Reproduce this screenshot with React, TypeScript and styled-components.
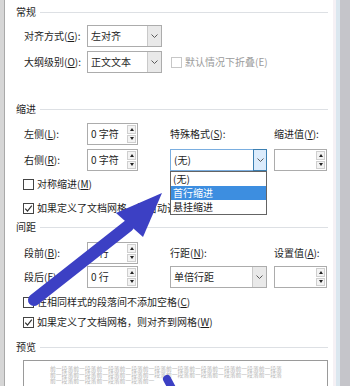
import React from "react";
import styled, { createGlobalStyle } from "styled-components";

const GlobalStyle = createGlobalStyle`
  html, body {
    margin: 0;
    padding: 0;
    background: #fff;
  }
  body {
    width: 350px;
    height: 386px;
    overflow: hidden;
    font-family: "Noto Sans CJK SC", "Noto Sans", sans-serif;
  }
`;

const Screen = styled.div`
  position: relative;
  display: flex;
  width: 350px;
  height: 386px;
  overflow: hidden;
`;

const LeftEdge = styled.div`
  width: 4px;
  background: #d6d6d6;
  border-right: 1px solid #a9a9a9;
`;

const RightEdge = styled.div`
  width: 10px;
  border-left: 3px solid #f5f1f5;
  box-shadow: inset 4px 0 0 #dbe7ef;
  padding-left: 4px;
  background: #c5c5ca;
  background-clip: content-box;
  box-sizing: content-box;
`;

const Dialog = styled.div`
  flex: 1;
  display: flex;
  flex-direction: column;
  padding: 5px 5px 0 11px;
  background: #fff;
  color: #1e1e1e;
  font-size: 10px;
  line-height: 14px;

  & > * {
    flex-shrink: 0;
  }
`;

const SectionTitle = styled.div<{ $top: number }>`
  display: flex;
  align-items: center;
  gap: 4px;
  height: 14px;
  margin-top: ${(p) => p.$top}px;

  &::after {
    content: "";
    flex: 1;
    height: 1px;
    background: #dde0e4;
  }
`;

const Row = styled.div<{ $top: number }>`
  display: flex;
  align-items: center;
  height: 22px;
  margin: ${(p) => p.$top}px 0 0 8px;
`;

const Label = styled.div<{ $width?: number }>`
  width: ${(p) => (p.$width ? `${p.$width}px` : "auto")};
  white-space: nowrap;
  display: flex;
  align-items: center;
`;

const FormGrid = styled.div<{ $top: number; $gap: number }>`
  display: grid;
  grid-template-columns: 63px 51px 32px 104px 53px;
  grid-auto-rows: 22px;
  row-gap: ${(p) => p.$gap}px;
  align-items: center;
  margin: ${(p) => p.$top}px 0 0 8px;
`;

const SelectWrap = styled.div`
  position: relative;
`;

const SelectBox = styled.div<{ $width: number; $focused?: boolean }>`
  display: flex;
  width: ${(p) => p.$width}px;
  height: 22px;
  box-sizing: border-box;
  border: 1px solid ${(p) => (p.$focused ? "#7aaee0" : "#acacac")};
  background: #fff;
`;

const SelectText = styled.div`
  flex: 1;
  display: flex;
  align-items: center;
  padding-left: 3px;
`;

const SelectButton = styled.div<{ $focused?: boolean }>`
  width: 14px;
  display: flex;
  align-items: center;
  justify-content: center;
  box-sizing: border-box;
  margin: ${(p) => (p.$focused ? "-1px -1px -1px 0" : "0")};
  border: ${(p) => (p.$focused ? "1px solid #3c7fb1" : "none")};
  border-left: 1px solid ${(p) => (p.$focused ? "#3c7fb1" : "#c9c9c9")};
  background: ${(p) => (p.$focused ? "#dcecfc" : "#e9e9e9")};
`;

const DropList = styled.div`
  position: absolute;
  top: 100%;
  left: 0;
  width: 97px;
  box-sizing: border-box;
  border: 1px solid #646464;
  background: #fff;
  z-index: 2;
`;

const DropItem = styled.div<{ $active?: boolean }>`
  height: 14px;
  line-height: 14px;
  padding-left: 2px;
  background: ${(p) => (p.$active ? "#3d8ee0" : "transparent")};
  color: ${(p) => (p.$active ? "#fff" : "#1e1e1e")};
`;

const SpinBox = styled.div<{ $width: number }>`
  display: flex;
  width: ${(p) => p.$width}px;
  height: 22px;
  box-sizing: border-box;
  border: 1px solid #acacac;
  background: #fff;
`;

const SpinText = styled.div`
  flex: 1;
  display: flex;
  align-items: center;
  padding-left: 3px;
  white-space: nowrap;
`;

const SpinButtons = styled.div`
  width: 9px;
  display: flex;
  flex-direction: column;
  gap: 1px;
  padding: 1px 1px 1px 0;
`;

const SpinButton = styled.div`
  flex: 1;
  display: flex;
  align-items: center;
  justify-content: center;
  border: 1px solid #cfcfcf;
  background: #f3f3f3;
`;

const Triangle = styled.span<{ $up?: boolean }>`
  width: 0;
  height: 0;
  border-left: 2.5px solid transparent;
  border-right: 2.5px solid transparent;
  ${(p) =>
    p.$up ? "border-bottom: 3px solid #222;" : "border-top: 3px solid #222;"}
`;

const CheckRow = styled.label<{ $top: number; $disabled?: boolean }>`
  display: flex;
  align-items: center;
  gap: 3px;
  height: 20px;
  margin-top: ${(p) => p.$top}px;
  padding-left: 7px;
  white-space: nowrap;
  color: ${(p) => (p.$disabled ? "#9b9b9b" : "inherit")};
`;

const InlineCheck = styled(CheckRow)`
  margin: 0 0 0 9px;
  padding-left: 0;
`;

const CheckBox = styled.span<{ $disabled?: boolean }>`
  width: 11px;
  height: 11px;
  box-sizing: border-box;
  border: 1px solid ${(p) => (p.$disabled ? "#c7c7c7" : "#444")};
  background: #fff;
  display: flex;
  align-items: center;
  justify-content: center;
`;

const Preview = styled.div`
  margin: 6px 0 0 7px;
  height: 40px;
  border: 1px solid #9a9a9a;
  padding: 5px 0 0 26px;
  color: #b7b7b7;
  font-size: 5.8px;
  line-height: 6px;
  white-space: nowrap;
`;

const ArrowLayer = styled.svg`
  position: absolute;
  inset: 0;
  width: 350px;
  height: 386px;
  pointer-events: none;
  z-index: 5;
`;

const Chevron = () => (
  <svg width="7" height="4" viewBox="0 0 7 4">
    <path d="M0.5 0.5 L3.5 3.5 L6.5 0.5" stroke="#5a5a5a" fill="none" />
  </svg>
);

const Check = () => (
  <svg width="9" height="9" viewBox="0 0 9 9">
    <path d="M1.2 4.6 L3.5 7 L7.8 1.6" stroke="#333" strokeWidth="1.2" fill="none" />
  </svg>
);

const Select: React.FC<{
  width: number;
  value: string;
  focused?: boolean;
  children?: React.ReactNode;
}> = ({ width, value, focused, children }) => (
  <SelectWrap>
    <SelectBox $width={width} $focused={focused}>
      <SelectText>{value}</SelectText>
      <SelectButton $focused={focused}>
        <Chevron />
      </SelectButton>
    </SelectBox>
    {children}
  </SelectWrap>
);

const Spin: React.FC<{ width: number; value?: string }> = ({ width, value }) => (
  <SpinBox $width={width}>
    <SpinText>{value}</SpinText>
    <SpinButtons>
      <SpinButton>
        <Triangle $up />
      </SpinButton>
      <SpinButton>
        <Triangle />
      </SpinButton>
    </SpinButtons>
  </SpinBox>
);

const Checkbox: React.FC<{
  top: number;
  checked?: boolean;
  children: React.ReactNode;
}> = ({ top, checked, children }) => (
  <CheckRow $top={top}>
    <CheckBox>{checked && <Check />}</CheckBox>
    <span>{children}</span>
  </CheckRow>
);

const previewRow = "前一段落".repeat(10);

export default function App() {
  return (
    <Screen>
      <GlobalStyle />
      <LeftEdge />
      <Dialog>
        <SectionTitle $top={0}>常规</SectionTitle>
        <Row $top={6}>
          <Label $width={63}>
            对齐方式(<u>G</u>):
          </Label>
          <Select width={75} value="左对齐" />
        </Row>
        <Row $top={4}>
          <Label $width={63}>
            大纲级别(<u>O</u>):
          </Label>
          <Select width={75} value="正文文本" />
          <InlineCheck $top={0} $disabled>
            <CheckBox $disabled />
            <span>默认情况下折叠(E)</span>
          </InlineCheck>
        </Row>

        <SectionTitle $top={29}>缩进</SectionTitle>
        <FormGrid $top={7} $gap={4}>
          <Label>
            左侧(<u>L</u>):
          </Label>
          <Spin width={51} value="0 字符" />
          <div />
          <Label>
            特殊格式(<u>S</u>):
          </Label>
          <Label>
            缩进值(<u>Y</u>):
          </Label>
          <Label>
            右侧(<u>R</u>):
          </Label>
          <Spin width={51} value="0 字符" />
          <div />
          <Select width={97} value="(无)" focused>
            <DropList>
              <DropItem>(无)</DropItem>
              <DropItem $active>首行缩进</DropItem>
              <DropItem>悬挂缩进</DropItem>
            </DropList>
          </Select>
          <Spin width={53} />
        </FormGrid>
        <Checkbox top={3}>
          对称缩进(<u>M</u>)
        </Checkbox>
        <Checkbox top={4} checked>
          如果定义了文档网格，则自动调整右缩进(<u>D</u>)
        </Checkbox>

        <SectionTitle $top={2}>间距</SectionTitle>
        <FormGrid $top={8} $gap={2}>
          <Label>
            段前(<u>B</u>):
          </Label>
          <Spin width={51} value="0 行" />
          <div />
          <Label>
            行距(<u>N</u>):
          </Label>
          <Label>
            设置值(<u>A</u>):
          </Label>
          <Label>
            段后(<u>F</u>):
          </Label>
          <Spin width={51} value="0 行" />
          <div />
          <Select width={97} value="单倍行距" />
          <Spin width={53} />
        </FormGrid>
        <Checkbox top={4}>
          在相同样式的段落间不添加空格(<u>C</u>)
        </Checkbox>
        <Checkbox top={0} checked>
          如果定义了文档网格，则对齐到网格(<u>W</u>)
        </Checkbox>

        <SectionTitle $top={8}>预览</SectionTitle>
        <Preview>
          <div>{previewRow}</div>
          <div>{previewRow}</div>
          <div>{"前一段落".repeat(4) + "前一"}</div>
        </Preview>
      </Dialog>
      <RightEdge />

      <ArrowLayer viewBox="0 0 350 386">
        <line
          x1="34"
          y1="300"
          x2="128"
          y2="226"
          stroke="#3c40c4"
          strokeWidth="12"
          strokeLinecap="round"
        />
        <polygon points="162,193 116,213 143,237" fill="#3c40c4" />
        <line
          x1="167"
          y1="379"
          x2="174"
          y2="392"
          stroke="#3c40c4"
          strokeWidth="8"
          strokeLinecap="round"
        />
      </ArrowLayer>
    </Screen>
  );
}
